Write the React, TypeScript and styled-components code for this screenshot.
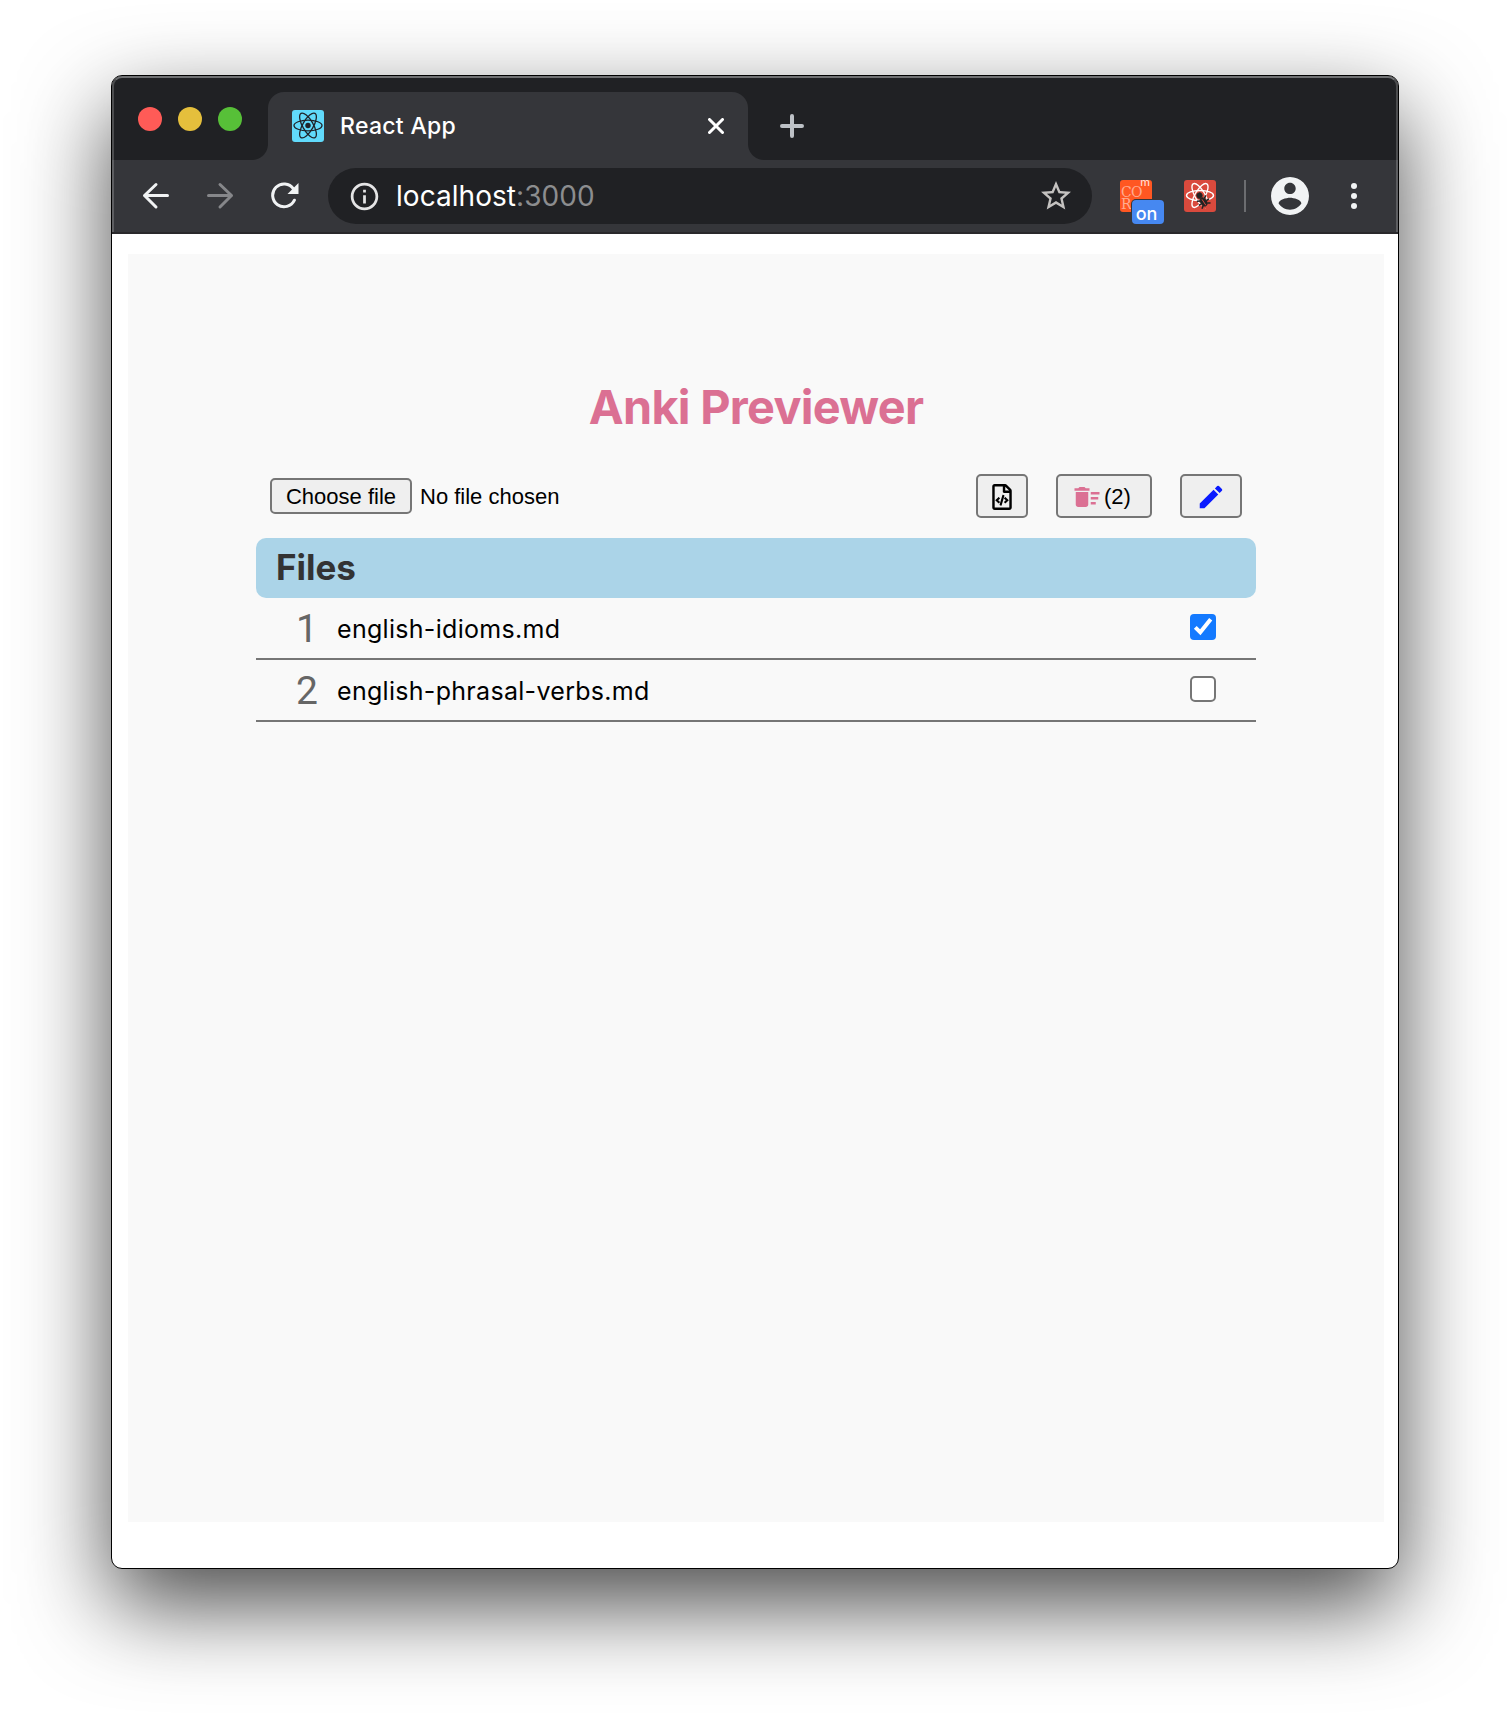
import React, { useState } from "react";
import styled, { createGlobalStyle } from "styled-components";
import { MdDeleteSweep, MdEdit, MdInfoOutline, MdStarBorder } from "react-icons/md";
import { FaRegFileCode } from "react-icons/fa";

const ui = `Inter, "Liberation Sans", sans-serif`;
const control = `"Liberation Sans", Arial, sans-serif`;

const GlobalStyle = createGlobalStyle`
  *, *::before, *::after { box-sizing: border-box; }
  html, body { margin: 0; background: #fff; }
  body { font-family: ${ui}; overflow: hidden; }
  #root { height: 1716px; }
`;

const Desktop = styled.div`
  height: 1716px;
  padding: 75px 111px 147px;
  overflow: hidden;
`;

const Window = styled.div`
  display: flex;
  flex-direction: column;
  width: 1288px;
  height: 1494px;
  border: 1px solid #000;
  border-radius: 11px;
  background: #fff;
  box-shadow: 0 36px 90px rgba(0, 0, 0, 0.71);
`;

const Chrome = styled.header`
  position: relative;
  height: 158px;
  background: #35363a;
  border-bottom: 2px solid #29282b;
  border-radius: 10px 10px 0 0;
  overflow: hidden;
  &::after {
    content: "";
    position: absolute;
    inset: 0 0 -2px;
    border: 2px solid rgba(255, 255, 255, 0.2);
    border-top-color: rgba(255, 255, 255, 0.36);
    border-bottom: 0;
    border-radius: 10px 10px 0 0;
    pointer-events: none;
  }
`;

const TabStrip = styled.div`
  display: flex;
  height: 84px;
  padding-top: 16px;
  background: #202124;
`;

const Lights = styled.div`
  display: flex;
  gap: 16px;
  width: 156px;
  padding: 15px 0 0 26px;
`;

const Light = styled.span<{ $color: string }>`
  width: 24px;
  height: 24px;
  border-radius: 50%;
  background: ${(p) => p.$color};
`;

const Tab = styled.div`
  position: relative;
  display: flex;
  align-items: center;
  width: 480px;
  height: 68px;
  padding: 0 24px;
  border-radius: 16px 16px 0 0;
  background: #35363a;
  color: #fff;
  &::before,
  &::after {
    content: "";
    position: absolute;
    bottom: 0;
    width: 16px;
    height: 16px;
  }
  &::before {
    left: -16px;
    background: radial-gradient(circle at 0 0, transparent 15.5px, #35363a 16.5px);
  }
  &::after {
    right: -16px;
    background: radial-gradient(circle at 100% 0, transparent 15.5px, #35363a 16.5px);
  }
`;

const TabTitle = styled.span`
  flex: 1;
  margin-left: 16px;
  font-size: 23px;
  font-weight: 500;
  letter-spacing: 0.3px;
`;

const NewTab = styled.div`
  display: flex;
  align-items: center;
  height: 68px;
  margin-left: 32px;
`;

const Toolbar = styled.div`
  display: flex;
  align-items: center;
  height: 72px;
  padding-left: 30px;
`;

const NavIcons = styled.div`
  display: flex;
  gap: 36px;
  width: 186px;
`;

const Omnibox = styled.div`
  display: flex;
  align-items: center;
  width: 764px;
  height: 56px;
  padding: 0 18px 0 20px;
  border-radius: 28px;
  background: #202124;
  color: #e4e4e5;
`;

const Url = styled.span`
  flex: 1;
  margin-left: 15px;
  font-size: 28px;
  line-height: 34px;
  letter-spacing: 0.05px;
  color: #fff;
`;

const Port = styled.span`
  color: #8c8d8f;
`;

const Extension = styled.div<{ $color: string; $gap: number }>`
  position: relative;
  flex: none;
  width: 32px;
  height: 32px;
  margin-left: ${(p) => p.$gap}px;
  border-radius: 3px;
  background: ${(p) => p.$color};
`;

const CorsGlyphs = styled.div`
  height: 32px;
  padding: 6px 0 0 1px;
  font: 14px/12px "DejaVu Serif", serif;
  letter-spacing: -0.6px;
  color: #ffab91;
`;

const CorsMark = styled.span`
  position: absolute;
  top: -5px;
  right: 2px;
  font: 500 11px/15px ${ui};
  color: #ffd9ce;
`;

const Badge = styled.span`
  position: absolute;
  left: 12px;
  top: 20px;
  width: 32px;
  height: 24px;
  padding-right: 3px;
  border-radius: 4px;
  background: #4688f1;
  box-shadow: 0 0 0 1px #35363a;
  color: #fff;
  font-size: 18px;
  font-weight: 500;
  line-height: 27px;
  text-align: center;
`;

const Divider = styled.span`
  width: 2px;
  height: 32px;
  margin: 0 25px 0 28px;
  background: #6c6d70;
`;

const Menu = styled.div`
  display: flex;
  flex-direction: column;
  gap: 4px;
  margin-left: 42px;
`;

const Dot = styled.span`
  width: 6px;
  height: 6px;
  border-radius: 50%;
  background: #f1f3f4;
`;

const Page = styled.main`
  height: 1268px;
  margin: 20px 14px 0 16px;
  padding: 0 128px;
  background: #f9f9f9;
`;

const Title = styled.h1`
  margin: 0;
  padding-top: 124px;
  font-size: 46.8px;
  line-height: 58px;
  font-weight: 700;
  letter-spacing: -0.7px;
  text-align: center;
  color: #db7093;
`;

const Actions = styled.div`
  display: flex;
  align-items: center;
  height: 44px;
  margin-top: 38px;
  padding: 0 14px;
  font: 22px ${control};
`;

const Button = styled.button`
  display: flex;
  align-items: center;
  gap: 2px;
  height: 44px;
  padding: 2px 14px 0;
  border: 2px solid #767676;
  border-radius: 5px;
  background: #efefef;
  color: #000;
  font: 22px ${control};
`;

const ChooseButton = styled(Button)`
  justify-content: center;
  width: 142px;
  height: 36px;
  padding: 1px 0 0;
  white-space: nowrap;
`;

const FileStatus = styled.span`
  flex: 1;
  margin-left: 8px;
  padding-top: 1px;
`;

const ButtonGroup = styled.div`
  display: flex;
  gap: 28px;
`;

const PreviewButton = styled(Button)`
  justify-content: center;
  width: 52px;
  padding: 2px 0 0;
`;

const ClearButton = styled(Button)`
  width: 96px;
  svg { color: #db7093; }
`;

const EditButton = styled(Button)`
  width: 62px;
  svg { color: #0a1aff; }
`;

const ListHeading = styled.h2`
  height: 60px;
  margin: 20px 0 0;
  padding-left: 20px;
  border-radius: 10px;
  background: #abd4e8;
  color: #333;
  font-size: 35px;
  line-height: 58px;
  font-weight: 700;
`;

const List = styled.ol`
  margin: 0;
  padding: 0;
  list-style: none;
`;

const Row = styled.li`
  display: flex;
  align-items: center;
  height: 62px;
  padding: 0 40px;
  border-bottom: 2px solid #767676;
`;

const Index = styled.span`
  width: 41px;
  padding-top: 2px;
  font: 39px/56px Roboto, ${control};
  color: #666;
`;

const FileName = styled.span`
  flex: 1;
  padding-top: 2px;
  font-size: 25px;
  letter-spacing: 0.3px;
  color: #000;
`;

const Checkbox = styled.button<{ $checked: boolean }>`
  display: flex;
  width: 26px;
  height: 26px;
  padding: 0;
  margin-bottom: 2px;
  border: ${(p) => (p.$checked ? "0" : "2px solid #767676")};
  border-radius: ${(p) => (p.$checked ? 4 : 5)}px;
  background: ${(p) => (p.$checked ? "#147aff" : "#fff")};
`;

function Orbits({ color, rx, ry, width }: { color: string; rx: number; ry: number; width: number }) {
  return (
    <g fill="none" stroke={color} strokeWidth={width}>
      {[0, 60, 120].map((angle) => (
        <ellipse key={angle} cx="16" cy="15.5" rx={rx} ry={ry} transform={`rotate(${angle} 16 15.5)`} />
      ))}
    </g>
  );
}

function Favicon() {
  return (
    <svg width="32" height="32" viewBox="0 0 32 32">
      <rect width="32" height="32" rx="3" fill="#61dafb" />
      <Orbits color="#20232a" rx={14} ry={5.3} width={1.3} />
      <circle cx="16" cy="15.5" r="2.7" fill="#20232a" />
    </svg>
  );
}

function DevtoolsIcon() {
  return (
    <svg width="32" height="32" viewBox="0 0 32 32">
      <Orbits color="#fff" rx={13.5} ry={5} width={1.4} />
      <path d="M18 19.5l8 .5 0 8-9 0z" fill="#d94a3d" />
      <g transform="translate(15.5 15.5) rotate(-33)" stroke="#222">
        <circle r="2.5" fill="#222" />
        <ellipse cx="0" cy="7.6" rx="2.8" ry="4.4" fill="#222" />
        <path d="M-2.5 5l-2.8-1.6M2.5 5l2.8-1.6M-3 8h-3M3 8h3M-2.5 10.6l-2.6 1.8M2.5 10.6l2.6 1.8" fill="none" strokeWidth="1.5" />
        <path d="M0 4.6v7" stroke="#d94a3d" strokeWidth="0.9" />
      </g>
    </svg>
  );
}

function Arrow({ color, flipped }: { color: string; flipped?: boolean }) {
  return (
    <svg width="28" height="28" viewBox="0 0 28 28" fill="none" stroke={color} strokeWidth="3" strokeLinecap="round" strokeLinejoin="round">
      <path d={flipped ? "M2.5 13.5h23M14 2.5l11.5 11L14 25" : "M25.5 13.5h-23M14 2.5l-11.5 11L14 25"} />
    </svg>
  );
}

function ReloadIcon() {
  return (
    <svg width="29" height="28" viewBox="-1 0 29 28">
      <path d="M23.4 18.2A11.4 11.4 0 1 1 22.4 6.8" fill="none" stroke="#f1f3f4" strokeWidth="3" strokeLinecap="round" />
      <path d="M27.5 1v11h-11z" fill="#f1f3f4" />
    </svg>
  );
}

const initialFiles = [
  { name: "english-idioms.md", checked: true },
  { name: "english-phrasal-verbs.md", checked: false },
];

export default function App() {
  const [files, setFiles] = useState(initialFiles);
  const toggle = (name: string) =>
    setFiles(files.map((f) => (f.name === name ? { ...f, checked: !f.checked } : f)));

  return (
    <Desktop>
      <GlobalStyle />
      <Window>
        <Chrome>
          <TabStrip>
            <Lights>
              <Light $color="#ff5b57" />
              <Light $color="#e5bf3c" />
              <Light $color="#57c038" />
            </Lights>
            <Tab>
              <Favicon />
              <TabTitle>React App</TabTitle>
              <svg width="16" height="16" viewBox="0 0 16 16" stroke="#fff" strokeWidth="3" strokeLinecap="round">
                <path d="M1.5 1.5l13 13M14.5 1.5l-13 13" />
              </svg>
            </Tab>
            <NewTab>
              <svg width="24" height="24" viewBox="0 0 24 24" stroke="#bdc1c6" strokeWidth="4" strokeLinecap="round">
                <path d="M12 2v20M2 12h20" />
              </svg>
            </NewTab>
          </TabStrip>
          <Toolbar>
            <NavIcons>
              <Arrow color="#f1f3f4" />
              <Arrow color="#86878a" flipped />
              <ReloadIcon />
            </NavIcons>
            <Omnibox>
              <MdInfoOutline size={33} />
              <Url>
                localhost<Port>:3000</Port>
              </Url>
              <MdStarBorder size={36} color="#c4c2c0" />
            </Omnibox>
            <Extension $color="#ff5722" $gap={28}>
              <CorsGlyphs>
                CO
                <br />R
              </CorsGlyphs>
              <CorsMark>m</CorsMark>
              <Badge>on</Badge>
            </Extension>
            <Extension $color="#d94a3d" $gap={32}>
              <DevtoolsIcon />
            </Extension>
            <Divider />
            <svg width="38" height="38" viewBox="2 2 20 20" fill="#f1f3f4">
              <path d="M12 2C6.48 2 2 6.48 2 12s4.48 10 10 10 10-4.48 10-10S17.52 2 12 2zm0 3c1.66 0 3 1.34 3 3s-1.34 3-3 3-3-1.34-3-3 1.34-3 3-3zm0 14.2c-2.5 0-4.71-1.28-6-3.22.03-1.99 4-3.08 6-3.08 1.99 0 5.97 1.09 6 3.08-1.29 1.94-3.5 3.22-6 3.22z" />
            </svg>
            <Menu>
              <Dot />
              <Dot />
              <Dot />
            </Menu>
          </Toolbar>
        </Chrome>
        <Page>
          <Title>Anki Previewer</Title>
          <Actions>
            <ChooseButton>Choose file</ChooseButton>
            <FileStatus>No file chosen</FileStatus>
            <ButtonGroup>
              <PreviewButton aria-label="Preview">
                <FaRegFileCode size={26} />
              </PreviewButton>
              <ClearButton>
                <MdDeleteSweep size={30} />
                <span>({files.length})</span>
              </ClearButton>
              <EditButton aria-label="Edit">
                <MdEdit size={30} />
              </EditButton>
            </ButtonGroup>
          </Actions>
          <ListHeading>Files</ListHeading>
          <List>
            {files.map((file, i) => (
              <Row key={file.name}>
                <Index>{i + 1}</Index>
                <FileName>{file.name}</FileName>
                <Checkbox
                  role="checkbox"
                  aria-checked={file.checked}
                  $checked={file.checked}
                  onClick={() => toggle(file.name)}
                >
                  {file.checked && (
                    <svg width="26" height="26" viewBox="0 0 26 26" fill="none" stroke="#fff" strokeWidth="4">
                      <path d="M5.3 13.3l5 5L20.7 5.3" />
                    </svg>
                  )}
                </Checkbox>
              </Row>
            ))}
          </List>
        </Page>
      </Window>
    </Desktop>
  );
}
